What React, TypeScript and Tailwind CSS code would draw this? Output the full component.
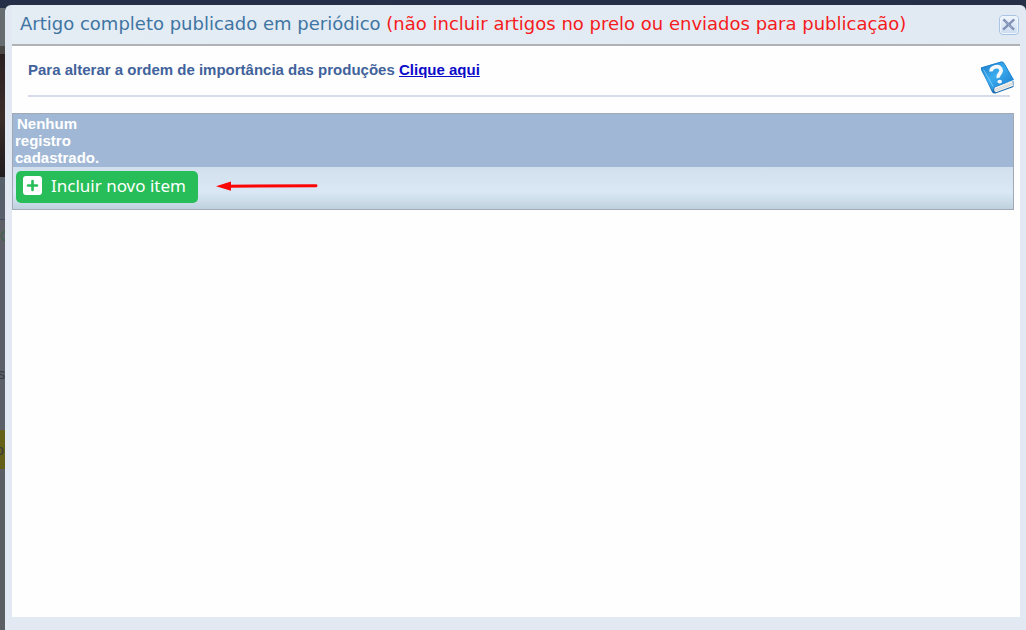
import React from "react";

function CloseIcon() {
  return (
    <svg viewBox="0 0 20 20" className="block h-5 w-5" aria-hidden="true">
      <defs>
        <linearGradient id="closeFace" x1="0" y1="0" x2="0" y2="1">
          <stop offset="0" stopColor="#f0f6fd" />
          <stop offset="1" stopColor="#cbdcef" />
        </linearGradient>
      </defs>
      <rect x="0.5" y="0.5" width="19" height="19" rx="3.5" fill="url(#closeFace)" stroke="#a9c3e4" />
      <rect x="1.5" y="1.5" width="17" height="17" rx="2.5" fill="none" stroke="#eef5fc" />
      <path d="M5.2 5.2L14.2 13.8M14.4 5.2L5 13.8" stroke="#8191b6" strokeWidth="2.4" strokeLinecap="square" />
      <path d="M7.6 9.5h4.4" stroke="#8191b6" strokeWidth="3" />
      <path d="M6.3 6.2L13 12.8" stroke="#a5b1cb" strokeWidth="0.8" />
    </svg>
  );
}

function HelpBook() {
  return (
    <svg viewBox="0 0 34 34" className="block h-[34px] w-[34px]" aria-hidden="true">
      <defs>
        <linearGradient id="bookCover" x1="0" y1="0" x2="1" y2="1">
          <stop offset="0" stopColor="#1b78c8" />
          <stop offset="0.45" stopColor="#3bacee" />
          <stop offset="1" stopColor="#1474c8" />
        </linearGradient>
      </defs>
      <path d="M1 8L12 31Q13 33 15.5 32.5L33.5 26V20L14 24Z" fill="#1a6db4" />
      <path d="M14.5 26.5Q13.5 31 16 31.2L33 25L32.5 19.5Z" fill="#f3f2ec" />
      <path d="M15 28.4L32.5 22M15.4 29.8L32.8 23.4" stroke="#c2c5c8" strokeWidth="0.6" />
      <path d="M1 6.5L21 0.8Q23 0.5 24 2L33.8 19L16 25.5Q13.5 26.5 12.5 30L1 9Z" fill="url(#bookCover)" />
      <path d="M1 7L21 1Q23 0.8 24 2.3L33.5 19" fill="none" stroke="#2385cf" />
      <path d="M3.5 8.5L13.2 25.5" stroke="#72c6f6" strokeWidth="1" />
      <path
        d="M11.2 10.6C10.5 5.8 18.5 3.8 20.8 8.1C22.8 12.3 17 13 18.4 16.8"
        fill="none"
        stroke="#f5f8fb"
        strokeWidth="3.6"
      />
      <ellipse cx="19.7" cy="20.6" rx="2.3" ry="1.9" fill="#f5f8fb" />
    </svg>
  );
}

function PlusSquare() {
  return (
    <svg viewBox="0 0 19 19" className="block h-[19px] w-[19px]" aria-hidden="true">
      <rect width="19" height="19" rx="3" fill="#fff" />
      <path d="M9.5 5v9M5 9.5h9" stroke="#27bd58" strokeWidth="2.6" strokeLinecap="round" />
    </svg>
  );
}

function PageEdge() {
  return (
    <div
      aria-hidden="true"
      className="flex w-[5px] shrink-0 flex-col overflow-hidden bg-[#5b5f63] font-['Liberation_Sans',sans-serif] text-sm leading-4 text-[#35393f]"
    >
      <div className="h-[3px] bg-[#253048]" />
      <div className="h-[38px] bg-[#666c70]" />
      <div className="h-[8px] bg-[#4b4744]" />
      <div className="h-[123px] bg-linear-to-b from-[#2b2021] via-[#3b2d29] to-[#211d20]" />
      <div className="h-[43px] border-b border-[#3f4d60] bg-[#57606a]" />
      <div className="flex h-[210px] flex-col justify-between bg-[#5d5f68] pt-2 pb-12">
        <span className="text-[#41604e]">C</span>
        <span className="-ml-0.5">s</span>
      </div>
      <div className="flex h-[39px] items-center bg-[#646018]">
        <span className="-ml-1">o</span>
      </div>
    </div>
  );
}

export default function App() {
  return (
    <div className="flex min-h-screen flex-col bg-[#253048] pt-[5px]">
      <div className="flex grow">
        <PageEdge />
        <section
          aria-labelledby="dialog-title"
          className="flex min-w-0 grow flex-col rounded-t-md bg-[#e3e9f3] pr-[6px] pb-[13px] pl-[7px]"
        >
          <header className="flex h-[39px] items-start justify-between bg-linear-to-r from-[#e4ecf4] to-[#e1eaf3] pt-[7px] pr-px pl-2">
            <h1 id="dialog-title" className="font-['DejaVu_Sans',sans-serif] text-lg leading-6 text-[#3f75a2]">
              Artigo completo publicado em periódico{" "}
              <span className="text-[#f51b20]">(não incluir artigos no prelo ou enviados para publicação)</span>
            </h1>
            <button type="button" aria-label="Fechar" className="mt-[3px] shrink-0">
              <CloseIcon />
            </button>
          </header>
          <main className="grow border-t-2 border-[#b0b3b5] bg-[#fefefe] pr-[6px] font-['Liberation_Sans',sans-serif] text-[15px] font-bold">
            <div className="relative mr-1 ml-4 border-b-2 border-[#d6dbe9] pt-[15px] pb-4">
              <p className="leading-[18px] text-[#41629b]">
                Para alterar a ordem de importância das produções{" "}
                <a href="#ordem" className="text-[#0c0bc9] underline">
                  Clique aqui
                </a>
              </p>
              <button type="button" aria-label="Ajuda" className="absolute -right-1 bottom-0">
                <HelpBook />
              </button>
            </div>
            <div className="mt-4 border border-[#a0a9b4]">
              <div className="bg-[#a0b8d5] px-0.5 pt-px pb-px text-white">
                <p className="w-[84px] indent-[2px] leading-[17px]">Nenhum registro cadastrado.</p>
              </div>
              <div className="flex items-start gap-[18px] bg-linear-to-b from-[#d2e0ee] via-[#dae8f6] via-60% to-[#bfd1de] px-[3px] pt-1 pb-[6px]">
                <button
                  type="button"
                  className="flex h-8 items-start gap-[9px] rounded-[5px] bg-[#27bd58] pt-[5px] pr-3 pl-[7px] font-['Noto_Sans',sans-serif] text-[17px] leading-[19px] font-normal text-white"
                >
                  <PlusSquare />
                  Incluir novo item
                </button>
                <svg viewBox="0 0 102 10" className="mt-[10px] block h-[10px] w-[102px]" aria-hidden="true">
                  <path d="M11 5.3L100 4.7" stroke="#fc0505" strokeWidth="3" strokeLinecap="round" />
                  <path d="M0 5.2L15 0.6V9.8Z" fill="#fc0505" />
                </svg>
              </div>
            </div>
          </main>
        </section>
      </div>
    </div>
  );
}
